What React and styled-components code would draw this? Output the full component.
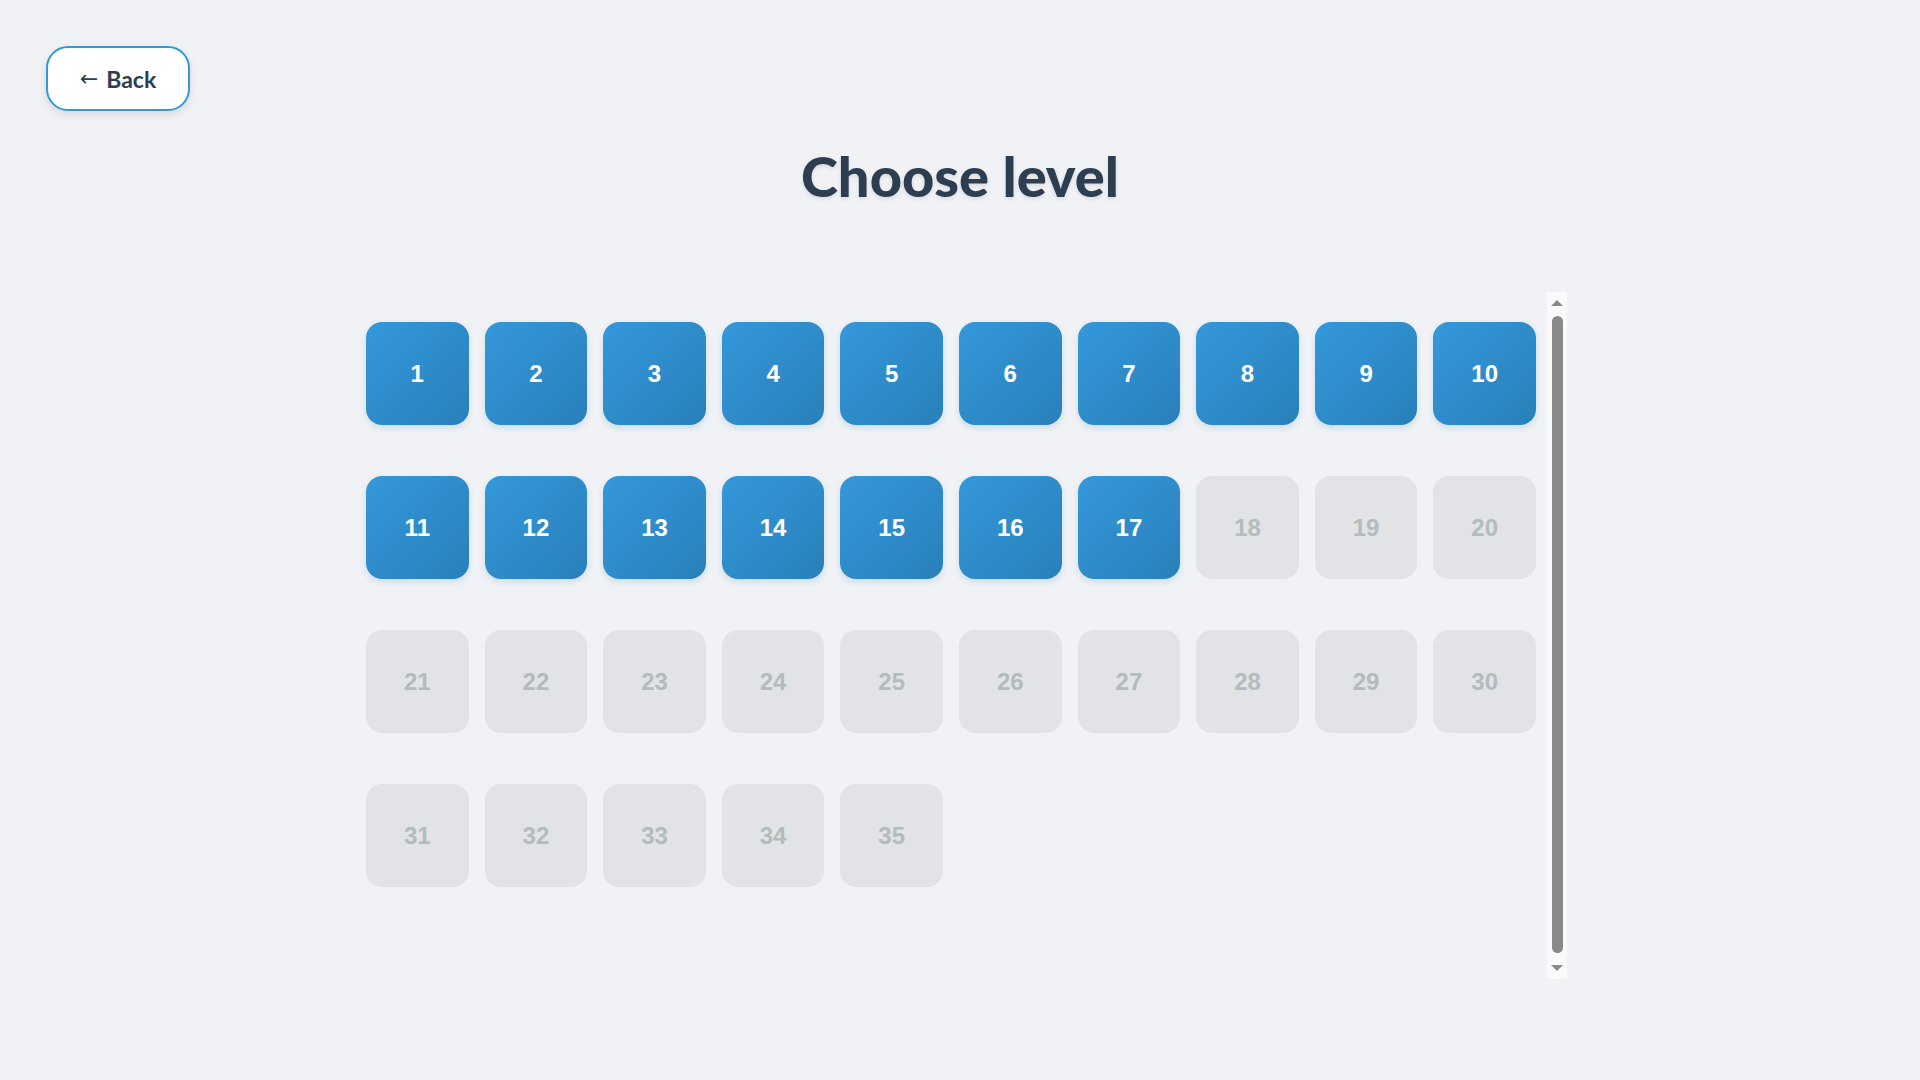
import React from "react";
import styled, { createGlobalStyle } from "styled-components";

const GlobalStyle = createGlobalStyle`
  html, body {
    margin: 0;
    padding: 0;
    background: #f0f2f5;
    font-family: "Liberation Sans", Arial, sans-serif;
  }
`;

const Page = styled.div`
  min-height: 100vh;
  box-sizing: border-box;
  padding: 46px 46px 0;
  display: flex;
  flex-direction: column;
`;

const BackButton = styled.button`
  align-self: flex-start;
  width: 144px;
  height: 65px;
  border: 2px solid #3498db;
  border-radius: 22px;
  background: #ffffff;
  color: #2c3e50;
  font-family: Lato, "Open Sans", sans-serif;
  font-weight: 700;
  font-size: 23px;
  box-shadow: 0 4px 10px rgba(0, 0, 0, 0.1);
  cursor: pointer;
  display: flex;
  align-items: center;
  justify-content: center;
  padding: 0 0 0 0;
`;

const Arrow = styled.span`
  font-family: "DejaVu Sans", sans-serif;
  font-weight: 400;
  font-size: 22px;
  margin-right: 8px;
`;

const Title = styled.h1`
  margin: 31px 0 83px;
  text-align: center;
  color: #2c3e50;
  font-family: Lato, "Open Sans", sans-serif;
  font-weight: 900;
  font-size: 56px;
  line-height: 1.2;
  text-shadow: 0 2px 4px rgba(0, 0, 0, 0.1);
`;

const LevelPanel = styled.div`
  align-self: center;
  width: 1214px;
  height: 687px;
  display: flex;
  overflow: hidden;
`;

const LevelGrid = styled.div`
  flex: 1;
  align-self: flex-start;
  display: grid;
  grid-template-columns: repeat(10, 1fr);
  column-gap: 16px;
  row-gap: 51px;
  padding: 30px 11px 0 13px;
`;

const ScrollTrack = styled.div`
  width: 20px;
  flex-shrink: 0;
  background: #fafafa;
  display: flex;
  flex-direction: column;
  align-items: center;
`;

const ScrollArrow = styled.div`
  width: 0;
  height: 0;
  border-left: 6px solid transparent;
  border-right: 6px solid transparent;
  ${({ $down }) =>
    $down
      ? "border-top: 6px solid #8a8a8a; margin: 12px 0 8px;"
      : "border-bottom: 6px solid #8a8a8a; margin: 8px 0 10px;"}
`;

const ScrollThumb = styled.div`
  width: 11px;
  flex: 1;
  background: #8a8a8a;
  border-radius: 6px;
`;

const LevelTile = styled.button`
  height: 103px;
  border: none;
  border-radius: 16px;
  font-family: "Liberation Sans", Arial, sans-serif;
  font-weight: 700;
  font-size: 24px;
  display: flex;
  align-items: center;
  justify-content: center;
  padding: 0;
  background: ${({ $locked }) =>
    $locked ? "#e1e3e7" : "linear-gradient(135deg, #3498db 0%, #2980b9 100%)"};
  color: ${({ $locked }) => ($locked ? "#b2bcbd" : "#ffffff")};
  box-shadow: ${({ $locked }) =>
    $locked ? "none" : "0 3px 6px rgba(41, 128, 185, 0.18)"};
  cursor: ${({ $locked }) => ($locked ? "default" : "pointer")};
`;

const levels = Array.from({ length: 35 }, (_, i) => i + 1);
const unlocked = 17;

export default function App() {
  return (
    <>
      <GlobalStyle />
      <Page>
        <BackButton>
          <Arrow>←</Arrow>Back
        </BackButton>
        <Title>Choose level</Title>
        <LevelPanel>
          <LevelGrid>
            {levels.map((n) => (
              <LevelTile key={n} $locked={n > unlocked}>
                {n}
              </LevelTile>
            ))}
          </LevelGrid>
          <ScrollTrack>
            <ScrollArrow />
            <ScrollThumb />
            <ScrollArrow $down />
          </ScrollTrack>
        </LevelPanel>
      </Page>
    </>
  );
}
